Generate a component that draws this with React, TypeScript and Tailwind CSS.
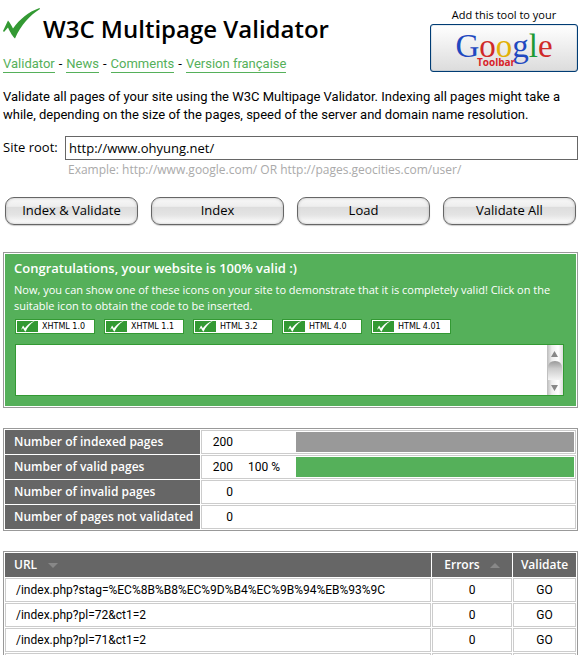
import React from 'react';

const navLinks = ['Validator', 'News', 'Comments', 'Version française'];

const actions = ['Index & Validate', 'Index', 'Load', 'Validate All'];

const badges = ['XHTML 1.0', 'XHTML 1.1', 'HTML 3.2', 'HTML 4.0', 'HTML 4.01'];

const stats = [
  { label: 'Number of indexed pages', count: 200, percent: '', share: 100, bar: 'bg-[#999999]' },
  { label: 'Number of valid pages', count: 200, percent: '100 %', share: 100, bar: 'bg-[#55b05a]' },
  { label: 'Number of invalid pages', count: 0, percent: '', share: 0, bar: 'bg-[#999999]' },
  { label: 'Number of pages not validated', count: 0, percent: '', share: 0, bar: 'bg-[#999999]' },
];

const pages = [
  { url: '/index.php?stag=%EC%8B%B8%EC%9D%B4%EC%9B%94%EB%93%9C', errors: 0 },
  { url: '/index.php?pl=72&ct1=2', errors: 0 },
  { url: '/index.php?pl=71&ct1=2', errors: 0 },
  { url: '/index.php?pl=70&ct1=2', errors: 0 },
];

const Check: React.FC<{ className: string }> = ({ className }) => (
  <svg viewBox="0 0 38 31" className={className} fill="currentColor" aria-hidden="true">
    <path d="M0 23 L5 12.500 C7 14.500 8.500 17.500 10 20.500 C17 11 25 4 36.500 0 L37 1 C27 7 18 17 12 30.500 C10 29 7 24 5 19.500 L1 24 Z" />
  </svg>
);

const GoogleToolbar: React.FC = () => (
  <div className="w-[148px] shrink-0 text-center">
    <p className="mt-[7px] mb-px text-[11px] leading-4">Add this tool to your</p>
    <a
      href="#toolbar"
      className="relative block h-12 rounded-[3px] border border-[#003c74] bg-gradient-to-b from-white to-[#dcdcdc] font-['Liberation_Serif',serif] text-[33px] leading-[42px] shadow-[inset_0_0_1px_#003c74]"
    >
      <span className="text-[#1f49c0]">G</span>
      <span className="text-[#d02a28]">o</span>
      <span className="text-[#e2b007]">o</span>
      <span className="text-[#1f49c0]">g</span>
      <span className="text-[#1c9a35]">l</span>
      <span className="text-[#d02a28]">e</span>
      <span className="absolute top-[31px] left-[46px] font-['Open_Sans',sans-serif] text-[10px] leading-3 font-bold text-[#d8232a]">
        Toolbar
      </span>
    </a>
  </div>
);

const Header: React.FC = () => (
  <header className="flex justify-between">
    <div>
      <div className="flex h-[54px] items-start pt-2">
        <Check className="h-[31px] w-[38px] text-[#339933]" />
        <h1 className="ml-[2px] pt-[3px] text-[24px] leading-9 font-semibold">W3C Multipage Validator</h1>
      </div>
      <nav className="flex gap-1 pt-[2px] font-[Roboto,sans-serif] text-[13px] leading-4">
        {navLinks.map((link, i) => (
          <React.Fragment key={link}>
            {i > 0 && <span>-</span>}
            <a href="#nav" className="border-b border-[#55b05a] text-[#55b05a]">{link}</a>
          </React.Fragment>
        ))}
      </nav>
    </div>
    <GoogleToolbar />
  </header>
);

const ScrollBar: React.FC = () => (
  <svg viewBox="0 0 16 50" className="h-[50px] w-4 shrink-0" aria-hidden="true">
    <defs>
      <linearGradient id="track">
        <stop offset="0" stopColor="#bbb" />
        <stop offset="0.3" stopColor="#eee" />
        <stop offset="0.7" stopColor="#fff" />
        <stop offset="1" stopColor="#ddd" />
      </linearGradient>
      <linearGradient id="thumb" x2="0" y2="1">
        <stop offset="0" stopColor="#999" />
        <stop offset="0.4" stopColor="#ccc" />
        <stop offset="1" stopColor="#f4f4f4" />
      </linearGradient>
    </defs>
    <rect width="16" height="50" fill="url(#track)" />
    <path d="M1 35 V23 Q1 16 8 16 Q15 16 15 23 V35 Z" fill="url(#thumb)" />
    <path d="M4 12 L7.500 6 L11 12 Z M4 40 L7.500 46 L11 40 Z" fill="#888" />
  </svg>
);

const Congratulations: React.FC = () => (
  <section className="mt-[27px] border border-[#999999] p-px">
    <div className="bg-[#55b05a] pt-[6px] pr-3 pb-[10px] pl-[9px] text-white">
      <h2 className="text-[13px] leading-4 font-semibold">Congratulations, your website is 100% valid :)</h2>
      <p className="mt-[6px] text-[11px] leading-4">
        Now, you can show one of these icons on your site to demonstrate that it is completely valid! Click on the
        suitable icon to obtain the code to be inserted.
      </p>
      <div className="mt-[5px] ml-px flex gap-[9px]">
        {badges.map(badge => (
          <button
            key={badge}
            className="flex h-[15px] w-20 items-center border border-[#339933] bg-white p-px font-['DejaVu_Sans',sans-serif] text-[8px] leading-[11px] text-black"
          >
            <span className="flex h-[11px] w-[21px] items-center justify-center bg-[#339933]">
              <Check className="h-[11px] w-[14px] text-white" />
            </span>
            <span className="ml-1">{badge}</span>
          </button>
        ))}
      </div>
      <div className="mt-[10px] ml-px flex border border-[#339933] bg-white">
        <textarea aria-label="Icon code" className="h-[50px] min-w-0 flex-1 resize-none overflow-hidden outline-none" />
        <ScrollBar />
      </div>
    </div>
  </section>
);

const StatsTable: React.FC = () => (
  <table className="mt-5 w-full table-fixed border-separate border-spacing-px border border-[#999999] text-[12px] leading-5">
    <colgroup>
      <col className="w-[195px]" />
      <col />
    </colgroup>
    <tbody>
      {stats.map(row => (
        <tr key={row.label} className="h-6">
          <th className="bg-[#666666] p-0 pl-[9px] text-left font-semibold text-white">{row.label}</th>
          <td className="border border-[#cccccc] p-px font-[Roboto,sans-serif]">
            <div className="flex h-5 items-center">
              <span className="w-[30px] text-right">{row.count}</span>
              <span className="w-[63px] pl-[15px]">{row.percent}</span>
              <span className="flex h-5 flex-1">
                <span className={row.bar} style={{ width: `${row.share}%` }}></span>
              </span>
            </div>
          </td>
        </tr>
      ))}
    </tbody>
  </table>
);

const PagesTable: React.FC = () => (
  <table className="mt-5 w-full table-fixed border-separate border-spacing-px border border-[#999999] text-center text-[12px] leading-5">
    <colgroup>
      <col />
      <col className="w-20" />
      <col className="w-[63px]" />
    </colgroup>
    <thead>
      <tr className="h-6 bg-[#666666] text-white">
        <th className="p-0 pl-[9px] text-left font-semibold">
          URL
          <svg viewBox="0 0 10 5" className="ml-[11px] inline h-[5px] w-[10px]" aria-hidden="true">
            <path d="M0 0 H10 L5 5 Z" fill="#888888" />
          </svg>
        </th>
        <th className="p-0 font-semibold">
          Errors
          <svg viewBox="0 0 10 5" className="ml-[10px] inline h-[5px] w-[10px]" aria-hidden="true">
            <path d="M0 5 H10 L5 0 Z" fill="#888888" />
          </svg>
        </th>
        <th className="p-0 font-semibold">Validate</th>
      </tr>
    </thead>
    <tbody className="font-[Roboto,sans-serif]">
      {pages.map(page => (
        <tr key={page.url} className="h-6">
          <td className="border border-[#cccccc] p-px pl-[10px] text-left">
            <a href="#page">{page.url}</a>
          </td>
          <td className="border border-[#cccccc] p-px">{page.errors}</td>
          <td className="border border-[#cccccc] p-px">
            <button>GO</button>
          </td>
        </tr>
      ))}
    </tbody>
  </table>
);

const App: React.FC = () => {
  return (
    <main className="bg-white pr-[2px] pl-[3px] font-['Open_Sans',sans-serif] text-[13px] text-black">
      <Header />
      <p className="mt-[15px] font-[Roboto,sans-serif] leading-[18px]">
        Validate all pages of your site using the W3C Multipage Validator. Indexing all pages might take a while,
        depending on the size of the pages, speed of the server and domain name resolution.
      </p>
      <div className="mt-3 flex items-center">
        <label htmlFor="root-url" className="w-[62px]">Site root:</label>
        <input
          id="root-url"
          type="text"
          defaultValue="http://www.ohyung.net/"
          className="h-6 min-w-0 flex-1 border border-[#666666] px-[3px] outline-none"
        />
      </div>
      <p className="mt-[2px] pl-[65px] text-[12px] leading-4 text-[#aaaaaa]">
        Example: http://www.google.com/ OR http://pages.geocities.com/user/
      </p>
      <div className="mt-[19px] flex gap-[13px] px-[2px]">
        {actions.map(action => (
          <button
            key={action}
            className="h-7 flex-1 rounded-[9px] border border-[#666666] bg-linear-[to_bottom,#f8f8f8_0%,#eeeeee_32%,#dddddd_36%,#e4e4e4_65%,#ffffff_100%] shadow-[0_1px_1px_#cccccc,inset_0_0_3px_#bbbbbb]"
          >
            {action}
          </button>
        ))}
      </div>
      <Congratulations />
      <StatsTable />
      <PagesTable />
    </main>
  );
};

export default App;
